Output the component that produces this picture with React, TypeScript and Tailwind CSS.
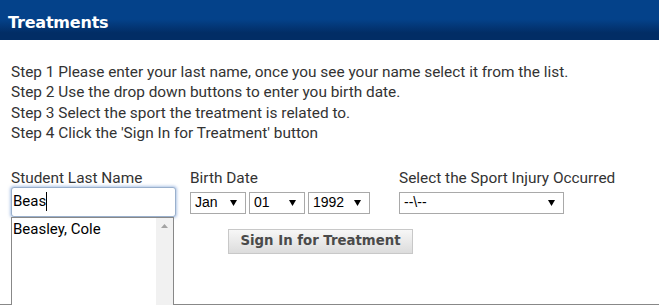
import React from "react";

const Arrow = () => (
  <svg width="7" height="6" viewBox="0 0 7 6" className="shrink-0">
    <path d="M0 0 H7 L3.5 6 Z" fill="#000" />
  </svg>
);

const FakeSelect = ({ value, w }: { value: string; w: string }) => (
  <div
    className={`${w} h-[22px] border border-[#a9a9a9] bg-white flex items-center justify-between pl-[4px] pr-[8px] text-[14px] text-black`}
    style={{ fontFamily: "'Liberation Sans', Arial, sans-serif" }}
  >
    <span>{value}</span>
    <Arrow />
  </div>
);

export default function App() {
  return (
    <div
      className="w-[659px] h-[305px] overflow-hidden bg-white relative"
      style={{ fontFamily: "Roboto, 'Noto Sans', sans-serif" }}
    >
      <div className="h-[40px] flex items-center pl-[8px] bg-[linear-gradient(to_bottom,#04428a_0%,#04428a_48%,#022d65_82%,#022d65_100%)]">
        <span
          className="text-white font-bold text-[16px] tracking-[-0.2px] pt-[5px]"
          style={{ fontFamily: "'DejaVu Sans', Verdana, sans-serif" }}
        >
          Treatments
        </span>
      </div>
      <div className="h-[265px] border-b border-[#888] px-[11px] pt-[22px] text-[#333]">
        <div className="text-[15.4px] leading-[20.4px]">
          <div>Step 1 Please enter your last name, once you see your name select it from the list.</div>
          <div>Step 2 Use the drop down buttons to enter you birth date.</div>
          <div>Step 3 Select the sport the treatment is related to.</div>
          <div>Step 4 Click the 'Sign In for Treatment' button</div>
        </div>
        <div className="flex mt-[25px]">
          <div className="w-[179px] shrink-0">
            <div className="text-[15.4px] leading-[18px]">Student Last Name</div>
            <div className="w-[165px] h-[30px] rounded-[3px] border border-[#9ab0cc] shadow-[0_0_3px_1px_rgba(110,150,210,0.55)] flex items-center pl-[1px] text-[15px] text-black bg-white">
              <span>Beas</span>
              <span className="inline-block w-px h-[19px] bg-black" />
            </div>
            <div className="w-[163px] h-[100px] border border-[#888] bg-white flex">
              <div className="flex-1 pl-[1px] text-[15px] text-black leading-[20px] pt-[1px]">Beasley, Cole</div>
              <div className="w-[17px] bg-[#f1f1f1] flex justify-center pt-[6px]">
                <svg width="7" height="4" viewBox="0 0 7 4">
                  <path d="M0 4 L3.5 0 L7 4 Z" fill="#a3a3a3" />
                </svg>
              </div>
            </div>
          </div>
          <div className="w-[209px] shrink-0">
            <div className="text-[15.4px] leading-[18px]">Birth Date</div>
            <div className="flex gap-[3px] mt-[5px]">
              <FakeSelect value="Jan" w="w-[56px]" />
              <FakeSelect value="01" w="w-[56px]" />
              <FakeSelect value="1992" w="w-[62px]" />
            </div>
            <button
              className="mt-[15px] ml-[38px] w-[185px] h-[25px] border border-[#c8c8c8] bg-[linear-gradient(to_bottom,#f7f7f7,#dcdcdc)] text-[13.3px] font-bold text-[#4a4a4a] flex items-center justify-center"
              style={{ fontFamily: "'DejaVu Sans', Verdana, sans-serif" }}
            >
              Sign In for Treatment
            </button>
          </div>
          <div>
            <div className="text-[15.4px] leading-[18px]">Select the Sport Injury Occurred</div>
            <div className="mt-[5px]">
              <FakeSelect value="--\--" w="w-[165px]" />
            </div>
          </div>
        </div>
      </div>
    </div>
  );
}
